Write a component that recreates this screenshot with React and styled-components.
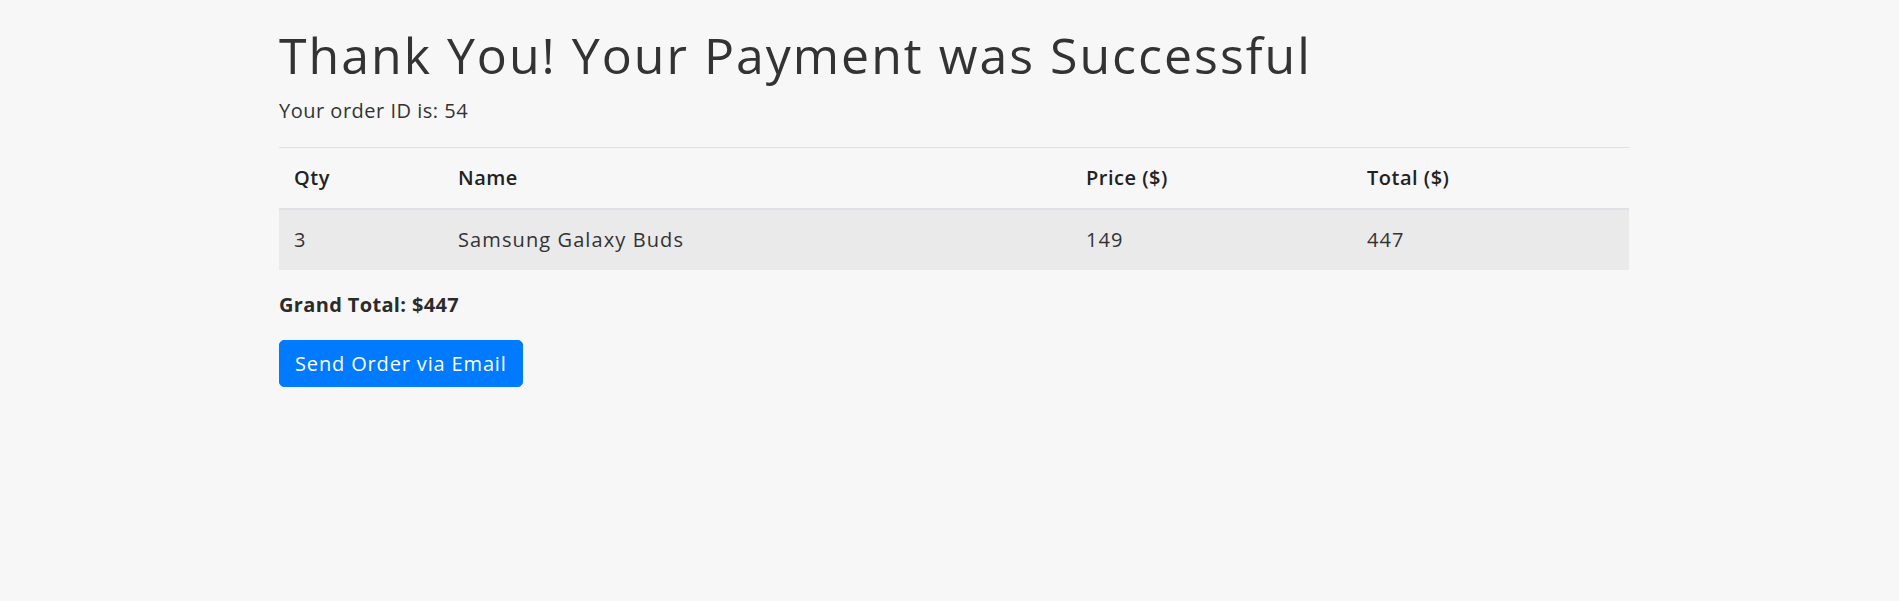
import React from 'react';
import styled, { createGlobalStyle } from 'styled-components';

const GlobalStyle = createGlobalStyle`
  html, body {
    margin: 0;
    padding: 0;
    background: #f7f7f7;
  }
  body {
    font-family: "Open Sans", "Liberation Sans", sans-serif;
    font-size: 20px;
    line-height: 1.5;
    color: #333333;
  }
`;

const Container = styled.main`
  width: 1350px;
  margin-left: 279px;
  padding-top: 25px;
`;

const Title = styled.h1`
  margin: 0 0 11px;
  font-size: 50px;
  line-height: 60px;
  font-weight: 400;
  letter-spacing: 2px;
  color: #333333;
`;

const OrderId = styled.p`
  margin: 0 0 21px;
  font-weight: 400;
  letter-spacing: 0.5px;
`;

const Table = styled.table`
  width: 100%;
  border-collapse: collapse;
  table-layout: fixed;
  margin-bottom: 20px;
`;

const HeadCell = styled.th`
  text-align: left;
  padding: 15px;
  font-weight: 600;
  letter-spacing: 0.5px;
  color: #222222;
  border-top: 1px solid #dee2e6;
  border-bottom: 2px solid #dee2e6;
`;

const Row = styled.tr`
  background: #eaeaea;
`;

const Cell = styled.td`
  padding: 15px;
  letter-spacing: 1.1px;
  color: #333333;
`;

const GrandTotal = styled.p`
  margin: 0 0 20px;
  font-weight: 700;
  letter-spacing: 0.35px;
  color: #2b2b2b;
`;

const Button = styled.button`
  display: inline-block;
  font-family: inherit;
  font-size: 20px;
  line-height: 30px;
  letter-spacing: 0.85px;
  padding: 7.5px 15px;
  color: #ffffff;
  background: #007bff;
  border: 1px solid #007bff;
  border-radius: 5px;
  cursor: pointer;
`;

const columns = [
  { label: 'Qty', width: 164 },
  { label: 'Name', width: 628 },
  { label: 'Price ($)', width: 281 },
  { label: 'Total ($)', width: 277 },
];

const items = [{ qty: 3, name: 'Samsung Galaxy Buds', price: 149 }];

const App = () => {
  const grand = items.reduce((sum, i) => sum + i.qty * i.price, 0);
  return (
    <React.Fragment>
      <GlobalStyle />
      <Container>
        <Title>Thank You! Your Payment was Successful</Title>
        <OrderId>Your order ID is: 54</OrderId>
        <Table>
          <colgroup>
            {columns.map(c => <col key={c.label} style={{ width: c.width }} />)}
          </colgroup>
          <thead>
            <tr>{columns.map(c => <HeadCell key={c.label}>{c.label}</HeadCell>)}</tr>
          </thead>
          <tbody>
            {items.map(i => (
              <Row key={i.name}>
                <Cell>{i.qty}</Cell>
                <Cell>{i.name}</Cell>
                <Cell>{i.price}</Cell>
                <Cell>{i.qty * i.price}</Cell>
              </Row>
            ))}
          </tbody>
        </Table>
        <GrandTotal>Grand Total: ${grand}</GrandTotal>
        <Button>Send Order via Email</Button>
      </Container>
    </React.Fragment>
  );
};

export default App;
